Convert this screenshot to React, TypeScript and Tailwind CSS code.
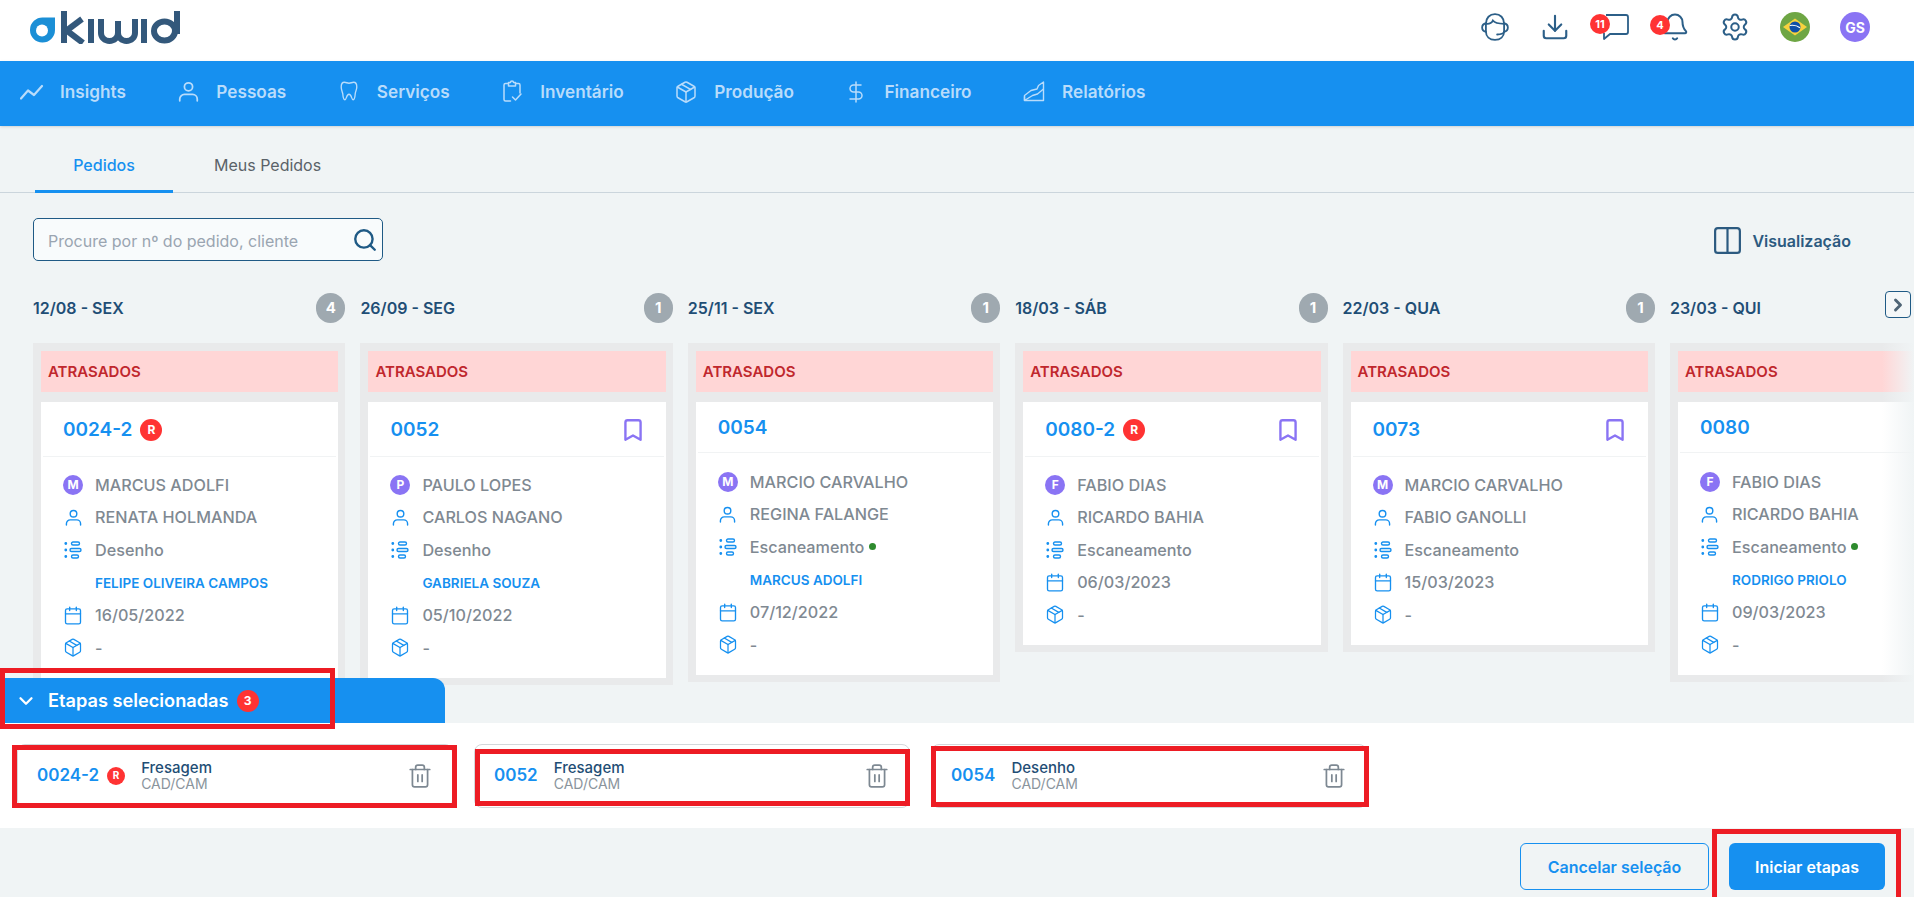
import React from 'react';
import {
  Bell,
  Bookmark,
  Calendar,
  ChevronDown,
  ChevronRight,
  Columns2,
  DollarSign,
  Download,
  Package,
  Search,
  Settings,
  Trash2,
} from 'lucide-react';

interface OrderColumn {
  date: string;
  count?: number;
  number: string;
  rework?: boolean;
  bookmark?: boolean;
  initial: string;
  doctor: string;
  patient: string;
  step: string;
  online?: boolean;
  assignee?: string;
  due: string;
}

const columns: OrderColumn[] = [
  { date: '12/08 - SEX', count: 4, number: '0024-2', rework: true, initial: 'M', doctor: 'MARCUS ADOLFI', patient: 'RENATA HOLMANDA', step: 'Desenho', assignee: 'FELIPE OLIVEIRA CAMPOS', due: '16/05/2022' },
  { date: '26/09 - SEG', count: 1, number: '0052', bookmark: true, initial: 'P', doctor: 'PAULO LOPES', patient: 'CARLOS NAGANO', step: 'Desenho', assignee: 'GABRIELA SOUZA', due: '05/10/2022' },
  { date: '25/11 - SEX', count: 1, number: '0054', initial: 'M', doctor: 'MARCIO CARVALHO', patient: 'REGINA FALANGE', step: 'Escaneamento', online: true, assignee: 'MARCUS ADOLFI', due: '07/12/2022' },
  { date: '18/03 - SÁB', count: 1, number: '0080-2', rework: true, bookmark: true, initial: 'F', doctor: 'FABIO DIAS', patient: 'RICARDO BAHIA', step: 'Escaneamento', due: '06/03/2023' },
  { date: '22/03 - QUA', count: 1, number: '0073', bookmark: true, initial: 'M', doctor: 'MARCIO CARVALHO', patient: 'FABIO GANOLLI', step: 'Escaneamento', due: '15/03/2023' },
  { date: '23/03 - QUI', number: '0080', initial: 'F', doctor: 'FABIO DIAS', patient: 'RICARDO BAHIA', step: 'Escaneamento', online: true, assignee: 'RODRIGO PRIOLO', due: '09/03/2023' },
];

const KiwidLogo = () => (
  <svg width="152" height="34" viewBox="0 0 152 34" fill="none" aria-label="Kiwid">
    <path d="M13 7.500H25V20A12.500 12.500 0 1 1 13 7.500z" fill="#1b8fd6" />
    <circle cx="12" cy="20.500" r="6" fill="#fff" />
    <g stroke="#33587b" strokeWidth="6">
      <line x1="34" y1="1" x2="34" y2="33" />
      <line x1="36" y1="21" x2="52" y2="9" />
      <line x1="36" y1="20" x2="53" y2="33" />
      <line x1="61" y1="9" x2="61" y2="33" />
      <path d="M71 9v14a8.500 8 0 0 0 17 0V11M88 23a8.500 8 0 0 0 17 0V9" />
      <line x1="114" y1="9" x2="114" y2="33" />
      <ellipse cx="134.500" cy="21" rx="10.500" ry="9.500" />
      <line x1="147" y1="1" x2="147" y2="24" />
    </g>
  </svg>
);

const HeadsetIcon = () => (
  <svg width="30" height="30" viewBox="0 0 28 28" fill="none" stroke="#2c5f88" strokeWidth="1.700" strokeLinecap="round">
    <path d="M5.500 11C5.500 5.500 9 2 14 2s8.500 3.500 8.500 9v7c0 5-3.500 8-8.500 8s-8.500-3-8.500-8z" />
    <path d="M5.500 11c4 .5 5.500-1 6.500-3 1.500 2 5 3 10.500 3" />
    <path d="M5.500 10.500C3.200 11 2 12.500 2 14.500s1.200 3.500 3.500 4M22.500 10.500c2.300.5 3.500 2 3.500 4s-1.200 3.500-3.500 4" />
    <path d="M22.500 18.500c-.5 1.500-2.500 2.500-6.500 2.500" />
  </svg>
);

const ChatIcon = () => (
  <svg width="30" height="30" viewBox="0 0 30 30" fill="none" stroke="currentColor" strokeWidth="1.800" strokeLinejoin="round">
    <path d="M6 3h20a2 2 0 0 1 2 2v15a2 2 0 0 1-2 2H10l-6 5v-6" />
  </svg>
);

const PersonIcon = ({ size }: { size: number }) => (
  <svg width={size} height={size} viewBox="0 0 18 18" fill="none" stroke="currentColor" strokeWidth="1.500" strokeLinecap="round">
    <circle cx="9" cy="5" r="3.500" />
    <path d="M1.500 17v-1.500A4 4 0 0 1 5.500 11.500h7a4 4 0 0 1 4 4V17" />
  </svg>
);

const ToothIcon = () => (
  <svg width="22" height="24" viewBox="0 0 24 24" fill="none" stroke="currentColor" strokeWidth="1.500" strokeLinejoin="round">
    <path d="M7 2.500c2 0 3 1 5 1s3-1 5-1c2.500 0 3.500 2 3.500 5 0 3-1.500 5-1.700 7.500-.2 2.500-.8 6.500-2.300 6.500-2 0-1.500-6-4.500-6s-2.500 6-4.500 6c-1.500 0-2.100-4-2.300-6.500C4.500 12.500 3.500 10.500 3.500 7.500c0-3 1-5 3.500-5z" />
  </svg>
);

const InsightsIcon = () => (
  <svg width="24" height="24" viewBox="0 0 24 24" fill="none" stroke="currentColor" strokeWidth="2.200" strokeLinecap="round" strokeLinejoin="round">
    <path d="M1 19.500 8 11.500l6 4.500 8-9" />
  </svg>
);

const InventoryIcon = () => (
  <svg width="24" height="24" viewBox="0 0 24 24" fill="none" stroke="currentColor" strokeWidth="1.500" strokeLinecap="round" strokeLinejoin="round">
    <path d="M8.500 4.500H5.500a1.500 1.500 0 0 0-1.500 1.500v14.500A1.500 1.500 0 0 0 5.500 22h5" />
    <path d="M15.500 4.500h3A1.500 1.500 0 0 1 20 6v8" />
    <path d="M8.500 3.500h2a1.500 1.500 0 0 1 3 0h2v3.500h-7z" />
    <path d="m12.500 18 3 3 5.500-6" />
  </svg>
);

const ReportIcon = () => (
  <svg width="24" height="24" viewBox="0 0 24 24" fill="none" stroke="currentColor" strokeWidth="1.400" strokeLinejoin="round">
    <path d="M2.500 21.500h19V3l-5 3.500-1.500 3.500-6 1.500-6.500 5z" />
    <path d="M2.500 21.500v-4M2.500 21.500l8-5 5-1.500 6-5" />
  </svg>
);

const StepsIcon = () => (
  <svg width="18" height="18" viewBox="0 0 18 18" fill="none" stroke="#1690f0" strokeWidth="1.400">
    <circle cx="1.800" cy="2.500" r=".7" fill="#1690f0" />
    <circle cx="1.800" cy="9" r=".7" fill="#1690f0" />
    <circle cx="1.800" cy="15.500" r=".7" fill="#1690f0" />
    <rect x="7.500" y="1" width="8" height="3" rx="1.500" />
    <rect x="6" y="7.500" width="11" height="3" rx="1.500" />
    <rect x="7.500" y="14" width="7" height="3" rx="1.500" />
  </svg>
);

const BrazilFlag = () => (
  <svg width="30" height="30" viewBox="0 0 30 30">
    <circle cx="15" cy="15" r="15" fill="#6ea644" />
    <path d="M15 6.500 27 15l-12 8.500L3 15z" fill="#f7d23e" />
    <circle cx="15" cy="15" r="5.500" fill="#0f4fa8" />
    <path d="M9.800 13.500c3.500-.6 7.500.2 10.200 2.300" stroke="#fff" strokeWidth="1.200" fill="none" />
  </svg>
);

const navItems = [
  { label: 'Insights', icon: <InsightsIcon /> },
  { label: 'Pessoas', icon: <PersonIcon size={21} /> },
  { label: 'Serviços', icon: <ToothIcon /> },
  { label: 'Inventário', icon: <InventoryIcon /> },
  { label: 'Produção', icon: <Package size={26} strokeWidth={1.5} /> },
  { label: 'Financeiro', icon: <DollarSign size={28} strokeWidth={1.5} /> },
  { label: 'Relatórios', icon: <ReportIcon /> },
];

const ReworkBadge = ({ small }: { small?: boolean }) => (
  <span
    className={
      small
        ? 'flex h-[18px] w-[18px] items-center justify-center rounded-full bg-[#ff3333] text-[10px] font-bold text-white'
        : 'flex h-[22px] w-[22px] items-center justify-center rounded-full bg-[#ff3333] text-[12px] font-bold text-white'
    }
  >
    R
  </span>
);

const InfoRow = ({ icon, children }: { icon: React.ReactNode; children: React.ReactNode }) => (
  <div className="flex h-[32.5px] items-center gap-3">
    <span className="flex w-5 shrink-0 items-center justify-center text-[#1690f0]">{icon}</span>
    <span className="flex items-center gap-[5px] text-[16.2px] font-medium whitespace-nowrap text-[#7f8992]">{children}</span>
  </div>
);

const BoardColumn = ({ col }: { col: OrderColumn }) => {
  const tallHeader = col.rework || col.bookmark;
  return (
    <div className="w-[312.4px] shrink-0">
      <div className="flex h-[30px] items-center justify-between">
        <span className="text-[16px] font-semibold text-[#1f4e75]">{col.date}</span>
        {col.count && (
          <span className="flex h-[30px] w-[29px] items-center justify-center rounded-full bg-[#9fa9b0] text-[15px] font-bold text-white">
            {col.count}
          </span>
        )}
      </div>
      <div className="mt-5 bg-[#e9eaeb] pt-2 pr-[7px] pb-[7px] pl-2">
        <div className="flex h-[41px] items-center bg-[#ffd6d6] pt-px pl-[7px] text-[15px] font-semibold text-[#c0272d]">ATRASADOS</div>
        <div className="mt-[10px] bg-white pb-[14px]">
          <div className={tallHeader ? 'mx-0.5 flex h-[55px] items-center justify-between border-b border-[#f1f3f4] pt-[2px] pr-[18px] pl-5' : 'mx-0.5 flex h-[51px] items-center justify-between border-b border-[#f1f3f4] pt-[2px] pr-[18px] pl-5'}>
            <div className="flex items-center gap-2">
              <span className="text-[19px] font-semibold text-[#1690f0]">{col.number}</span>
              {col.rework && <ReworkBadge />}
            </div>
            {col.bookmark && <Bookmark size={26} strokeWidth={2.2} className="text-[#8a74f4]" />}
          </div>
          <div className={tallHeader ? 'px-[22px] pt-[11.5px]' : 'px-[22px] pt-[12.5px]'}>
            <InfoRow
              icon={
                <span className="flex h-5 w-5 items-center justify-center rounded-full bg-[#8a74f4] text-[12px] font-bold text-white">{col.initial}</span>
              }
            >
              {col.doctor}
            </InfoRow>
            <InfoRow icon={<PersonIcon size={17} />}>{col.patient}</InfoRow>
            <InfoRow icon={<StepsIcon />}>
              {col.step}
              {col.online && <span className="h-[7px] w-[7px] rounded-full bg-[#2e8b2e]" />}
            </InfoRow>
            {col.assignee && (
              <div className="flex h-[33px] items-center pt-[2px] pl-8 text-[13.5px] font-semibold whitespace-nowrap text-[#1690f0]">{col.assignee}</div>
            )}
            <InfoRow icon={<Calendar size={21} strokeWidth={1.6} />}>{col.due}</InfoRow>
            <InfoRow icon={<Package size={21} strokeWidth={1.5} />}>-</InfoRow>
          </div>
        </div>
      </div>
    </div>
  );
};

const selected = [
  { number: '0024-2', rework: true, step: 'Fresagem', mark: '-top-[0px] -right-[5px] -bottom-px -left-[6px]' },
  { number: '0052', step: 'Fresagem', mark: 'top-1 -right-px bottom-px left-0' },
  { number: '0054', step: 'Desenho', mark: 'top-px -right-[3px] bottom-0 -left-px' },
];

const SelectedCard = ({ item }: { item: (typeof selected)[number] }) => (
  <div className="relative flex h-16 w-[436px] items-center rounded-lg border border-[#d3d7da] bg-white pr-[19px] pl-[19px]">
    <span className="text-[17px] font-semibold text-[#1690f0]">{item.number}</span>
    {item.rework && (
      <span className="ml-2">
        <ReworkBadge small />
      </span>
    )}
    <div className="ml-4 flex flex-1 flex-col pb-[2px]">
      <span className="text-[15px] leading-[17px] font-medium text-[#1f4e75]">{item.step}</span>
      <span className="text-[14px] leading-[15px] text-[#8a949c]">CAD/CAM</span>
    </div>
    <Trash2 size={26} strokeWidth={1.6} className="text-[#7d8892]" />
    <div className={`absolute border-[5px] border-[#ed1c24] ${item.mark}`} />
  </div>
);

export default function App() {
  return (
    <div className="flex h-[897px] w-[1914px] flex-col overflow-hidden bg-[#f0f4f5] font-['Inter',sans-serif]">
      <header className="flex h-[61px] shrink-0 items-center justify-between bg-white pr-11 pb-[7px] pl-[30px]">
        <KiwidLogo />
        <div className="flex items-center gap-[30px] text-[#2c5f88]">
          <span className="flex w-[30px] justify-center">
            <HeadsetIcon />
          </span>
          <span className="flex w-[30px] justify-center">
            <Download size={30} strokeWidth={1.7} />
          </span>
          <span className="relative flex w-[30px] justify-center">
            <ChatIcon />
            <span className="absolute top-[2px] -left-[10px] flex h-5 w-5 items-center justify-center rounded-full bg-[#ff3333] text-[11px] font-bold text-white">11</span>
          </span>
          <span className="relative flex w-[30px] justify-center">
            <Bell size={32} strokeWidth={1.6} />
            <span className="absolute top-[4px] -left-[10px] flex h-5 w-5 items-center justify-center rounded-full bg-[#ff3333] text-[11px] font-bold text-white">4</span>
          </span>
          <span className="flex w-[30px] justify-center">
            <Settings size={32} strokeWidth={1.6} />
          </span>
          <BrazilFlag />
          <span className="flex h-[30px] w-[30px] items-center justify-center rounded-full bg-[#8a74f4] text-[14px] font-bold text-white">GS</span>
        </div>
      </header>

      <nav className="flex h-[65px] shrink-0 items-center gap-[50.5px] bg-[#1690f0] pb-1 pl-5 shadow-sm">
        {navItems.map((item) => (
          <div key={item.label} className="flex items-center gap-4 text-[#b9dcfb]">
            <span className="flex w-6 justify-center">{item.icon}</span>
            <span className="text-[17.2px] font-semibold">{item.label}</span>
          </div>
        ))}
      </nav>

      <div className="flex h-[67px] shrink-0 items-end gap-[3px] border-b border-[#cbd5dc] pl-[35px]">
        <div className="-mb-px flex h-[53px] w-[138px] items-center justify-center border-b-[3px] border-[#1690f0] text-[16px] font-medium text-[#1690f0]">Pedidos</div>
        <div className="-mb-px flex h-[53px] items-center px-[38px] pb-[3px] text-[16px] text-[#5a6268]">Meus Pedidos</div>
      </div>

      <main className="relative min-h-0 flex-1 overflow-hidden">
        <div className="flex items-center justify-between pt-[25px] pr-[63px] pl-[33px]">
          <div className="flex h-[43px] w-[350px] items-center rounded-[5px] border border-[#1f5a85] bg-[#f8fbfc] pr-1 pl-[14px]">
            <input
              readOnly
              placeholder="Procure por nº do pedido, cliente"
              className="min-w-0 flex-1 bg-transparent pt-[2px] text-[16px] outline-none placeholder:text-[#9aa5b1]"
            />
            <Search size={26} strokeWidth={2.2} className="text-[#1f5a85]" />
          </div>
          <div className="flex items-center gap-2 pt-[2px] text-[#2c5a80]">
            <Columns2 size={33} strokeWidth={1.6} />
            <span className="text-[16px] font-semibold">Visualização</span>
          </div>
        </div>
        <div className="mt-8 flex items-start gap-[15px] pl-[33px]">
          {columns.map((col) => (
            <BoardColumn key={col.number} col={col} />
          ))}
        </div>
        <div className="pointer-events-none absolute top-[107px] right-0 bottom-0 w-8 bg-gradient-to-r from-transparent to-[#f0f4f5]" />
        <button className="absolute top-[98px] right-[3px] flex h-[27px] w-[26px] items-center justify-center rounded-[4px] border border-[#1f5a85] bg-[#f4f7f8] text-[#4f6475]">
          <ChevronRight size={20} strokeWidth={3.5} />
        </button>
      </main>

      <div className="relative -mt-[45px] flex h-[45px] w-[445px] shrink-0 items-center rounded-tr-[12px] bg-[#1690f0] pl-[15px] text-white">
        <ChevronDown size={22} strokeWidth={2.5} />
        <span className="ml-[11px] text-[18.2px] font-semibold">Etapas selecionadas</span>
        <span className="ml-2 flex h-[22px] w-[22px] items-center justify-center rounded-full bg-[#ff3333] text-[12px] font-bold">3</span>
        <div className="absolute -top-[10px] -bottom-[6px] left-0 w-[335px] border-[5px] border-[#ed1c24]" />
      </div>

      <section className="flex h-[105px] shrink-0 items-center gap-[21px] bg-white pl-[17px]">
        {selected.map((item) => (
          <SelectedCard key={item.number} item={item} />
        ))}
      </section>

      <footer className="flex h-[69px] shrink-0 justify-end gap-5 pt-[15px] pr-[29px]">
        <button className="h-[47px] w-[189px] rounded-md border border-[#1690f0] text-[16px] font-semibold text-[#1690f0]">Cancelar seleção</button>
        <div className="relative">
          <button className="h-[47px] w-[156px] rounded-md bg-[#1690f0] text-[16px] font-semibold text-white">Iniciar etapas</button>
          <div className="absolute -top-[14px] -right-4 -bottom-[7px] -left-[17px] border-[5px] border-[#ed1c24]" />
        </div>
      </footer>
    </div>
  );
}
